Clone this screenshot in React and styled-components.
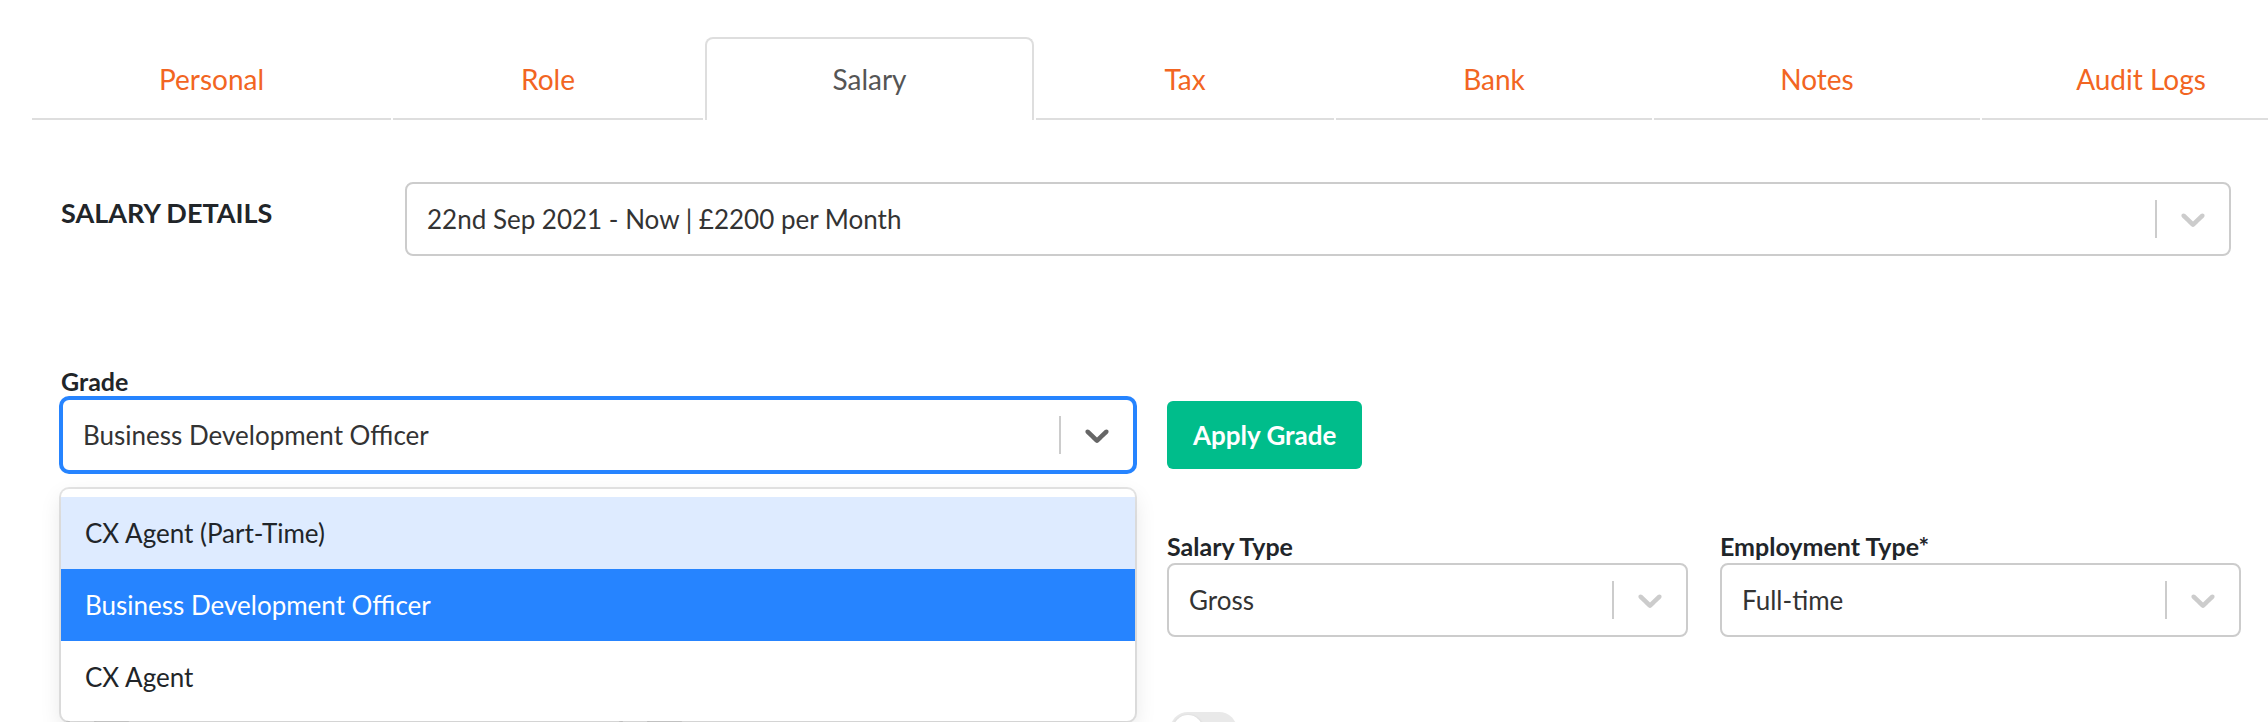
import React from 'react';
import styled, { createGlobalStyle, css } from 'styled-components';

const GlobalStyle = createGlobalStyle`
  html, body { margin: 0; padding: 0; overflow: hidden; background: #fff; }
  body { font-family: Lato, "Open Sans", sans-serif; color: #212529; }
  *, *::before, *::after { box-sizing: border-box; }
`;

const Page = styled.div`
  width: 2268px;
  height: 722px;
  overflow: hidden;
  padding-top: 37px;
`;

const TabBar = styled.nav`
  display: flex;
  width: max-content;
  padding-left: 31px;
`;

const Tab = styled.div`
  flex: 0 0 ${(p) => p.$w - 2}px;
  margin: 0 1px;
  height: 83px;
  display: flex;
  align-items: center;
  justify-content: center;
  font-size: 28px;
  color: ${(p) => (p.$active ? '#555' : '#f26522')};
  cursor: pointer;
  ${(p) =>
    p.$active
      ? css`
          border: 2px solid #dedede;
          border-bottom: none;
          border-radius: 8px 8px 0 0;
          padding-bottom: 2px;
        `
      : css`
          box-shadow: inset 0 -2px 0 #dedede;
        `}
`;

const DetailsRow = styled.section`
  display: grid;
  grid-template-columns: 344px 1fr;
  margin-top: 62px;
  padding: 0 37px 0 61px;
`;

const SectionTitle = styled.h2`
  margin: 0;
  padding-top: 14px;
  font-size: 27px;
  line-height: 34px;
  font-weight: 700;
  color: #212529;
`;

const FormRow = styled.div`
  display: grid;
  grid-template-columns: repeat(4, 1fr);
  column-gap: 32px;
  padding: 0 27px 0 61px;
  margin-top: ${(p) => p.$gap}px;
`;

const Field = styled.div`
  display: flex;
  flex-direction: column;
  grid-column: ${(p) => p.$col || 'auto'};
`;

const Label = styled.label`
  font-size: 25px;
  line-height: 30px;
  font-weight: 700;
  color: #212529;
  margin-bottom: 2px;
`;

const ControlWrap = styled.div`
  position: relative;
`;

const Control = styled.div`
  display: flex;
  align-items: center;
  height: 74px;
  background: #fff;
  border: 2px solid ${(p) => (p.$focused ? '#2684ff' : '#cccccc')};
  border-radius: 8px;
  ${(p) =>
    p.$focused &&
    css`
      box-shadow: 0 0 0 2px #2684ff;
    `}
`;

const Value = styled.div`
  flex: 1;
  padding: 0 20px;
  font-size: 26px;
  color: #333;
  white-space: nowrap;
  overflow: hidden;
`;

const Separator = styled.span`
  align-self: stretch;
  width: 2px;
  margin: 16px 0;
  background: #cccccc;
`;

const Indicator = styled.div`
  display: flex;
  padding: 16px;
  color: ${(p) => (p.$focused ? '#666666' : '#cccccc')};
`;

const Menu = styled.div`
  position: absolute;
  top: calc(100% + 17px);
  left: 0;
  right: 0;
  z-index: 10;
  background: #fff;
  border-radius: 8px;
  padding: 8px 0;
  box-shadow: 0 0 0 2px rgba(0, 0, 0, 0.1), 0 8px 22px rgba(0, 0, 0, 0.1);
`;

const Option = styled.div`
  height: 72px;
  display: flex;
  align-items: center;
  padding: 0 24px;
  font-size: 26px;
  color: ${(p) => (p.$selected ? '#fff' : '#212529')};
  background: ${(p) => (p.$selected ? '#2684ff' : p.$hover ? '#deebff' : '#fff')};
`;

const ApplyButton = styled.button`
  grid-column: 3;
  justify-self: start;
  align-self: end;
  margin-bottom: 3px;
  height: 68px;
  padding: 0 26px;
  border: none;
  border-radius: 6px;
  background: #00bd8b;
  color: #fff;
  font-family: inherit;
  font-size: 26px;
  font-weight: 700;
`;

const Toggle = styled.span`
  display: block;
  width: 67px;
  height: 36px;
  margin-left: 3px;
  border-radius: 18px;
  background: #e9e9e9;
  position: relative;
  &::before {
    content: '';
    position: absolute;
    left: 3px;
    top: 3px;
    width: 30px;
    height: 30px;
    border-radius: 50%;
    background: #fff;
    box-shadow: 0 1px 3px rgba(0, 0, 0, 0.2);
  }
`;

const Chevron = () => (
  <svg viewBox="0 0 20 20" width="40" height="40" fill="currentColor" aria-hidden="true">
    <path d="M4.516 7.548c0.436-0.446 1.043-0.481 1.576 0l3.908 3.747 3.908-3.747c0.533-0.481 1.141-0.446 1.574 0 0.436 0.445 0.408 1.197 0 1.615-0.406 0.418-4.695 4.502-4.695 4.502-0.217 0.223-0.502 0.335-0.787 0.335s-0.57-0.112-0.789-0.335c0 0-4.287-4.084-4.695-4.502s-0.436-1.17 0-1.615z" />
  </svg>
);

const Select = ({ value, focused, children }) => (
  <ControlWrap>
    <Control $focused={focused}>
      <Value>{value}</Value>
      <Separator />
      <Indicator $focused={focused}>
        <Chevron />
      </Indicator>
    </Control>
    {children}
  </ControlWrap>
);

const tabs = [
  { label: 'Personal', w: 361 },
  { label: 'Role', w: 312 },
  { label: 'Salary', w: 331, active: true },
  { label: 'Tax', w: 300 },
  { label: 'Bank', w: 318 },
  { label: 'Notes', w: 328 },
  { label: 'Audit Logs', w: 320 },
];

const grades = [
  { label: 'CX Agent (Part-Time)', hover: true },
  { label: 'Business Development Officer', selected: true },
  { label: 'CX Agent' },
];

export default function App() {
  return (
    <Page>
      <GlobalStyle />
      <TabBar>
        {tabs.map((t) => (
          <Tab key={t.label} $w={t.w} $active={t.active}>
            {t.label}
          </Tab>
        ))}
      </TabBar>

      <DetailsRow>
        <SectionTitle>SALARY DETAILS</SectionTitle>
        <Select value="22nd Sep 2021 - Now | £2200 per Month" />
      </DetailsRow>

      <FormRow $gap={110}>
        <Field $col="span 2">
          <Label>Grade</Label>
          <Select value="Business Development Officer" focused>
            <Menu>
              {grades.map((g) => (
                <Option key={g.label} $selected={g.selected} $hover={g.hover}>
                  {g.label}
                </Option>
              ))}
            </Menu>
          </Select>
        </Field>
        <ApplyButton>Apply Grade</ApplyButton>
      </FormRow>

      <FormRow $gap={59}>
        <Field $col="3">
          <Label>Salary Type</Label>
          <Select value="Gross" />
        </Field>
        <Field $col="4">
          <Label>Employment Type*</Label>
          <Select value="Full-time" />
        </Field>
      </FormRow>

      <FormRow $gap={75}>
        <Toggle />
        <Toggle />
        <Toggle />
      </FormRow>
    </Page>
  );
}
